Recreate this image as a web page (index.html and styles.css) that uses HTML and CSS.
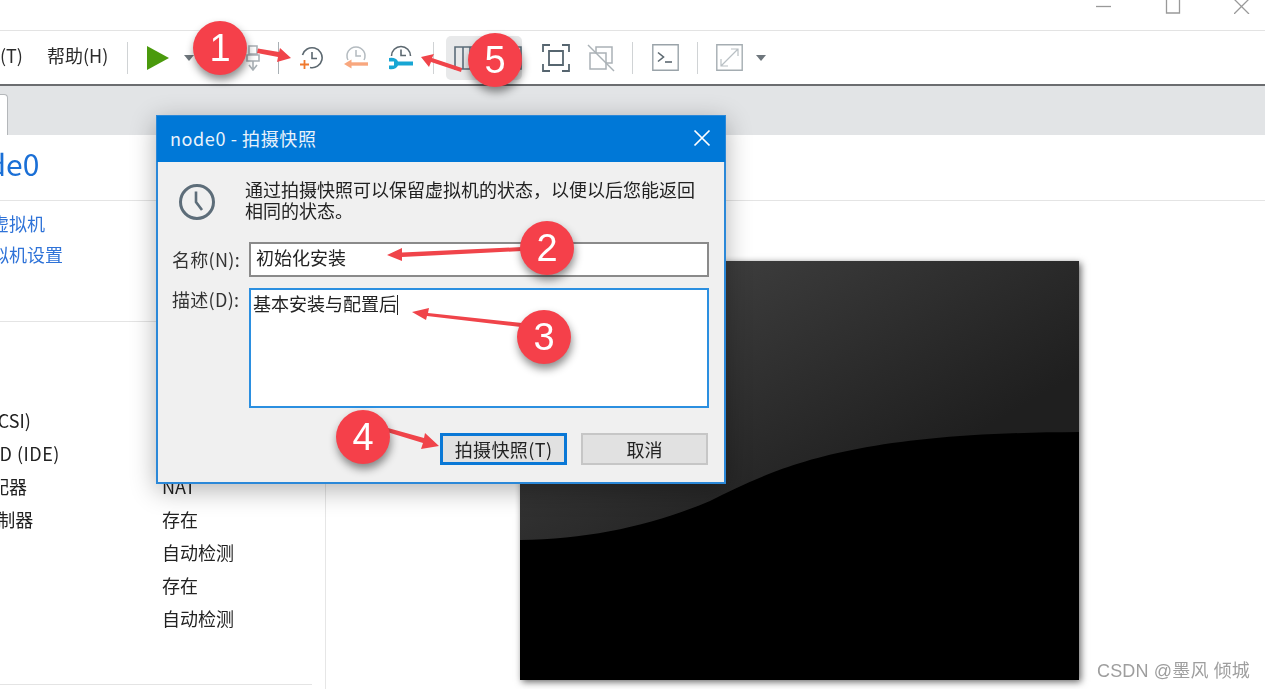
FILE: index.html
```html
<!DOCTYPE html>
<html lang="zh-CN">
<head>
    <meta charset="UTF-8">
    <title>node0 - 拍摄快照</title>
    <link rel="stylesheet" href="styles.css">
</head>
<body>

<div class="app">
    <div class="titlebar">
        <svg class="win-btn" width="16" height="14" viewBox="0 0 16 14"><path d="M0 6.500H15" stroke="#999" stroke-width="1.300"/></svg>
        <svg class="win-btn" width="16" height="14" viewBox="0 0 16 14"><path d="M1.500 0V13H14.500V0" fill="none" stroke="#999" stroke-width="1.300"/></svg>
        <svg class="win-btn" width="16" height="14" viewBox="0 0 16 14"><path d="M0 -1L15 14M15 -1L0 14" stroke="#999" stroke-width="1.300"/></svg>
    </div>

    <div class="toolbar">
        <span class="menu menu-tools">(T)</span>
        <span class="menu menu-help">帮助(H)</span>
        <i class="sep sep-a"></i>
        <svg class="tool play" width="24" height="26" viewBox="0 0 24 26"><path d="M1 1L23 13L1 25Z" fill="#4a9a0c"/></svg>
        <i class="caret caret-play"></i>
        <svg class="tool send" width="14" height="26" viewBox="0 0 14 26"><path d="M3 1H11V9H3ZM1 10H13V16H1ZM7 16V24M3 20L7 25L11 20" fill="none" stroke="#a9b0b5" stroke-width="1.600"/></svg>
        <i class="sep sep-b"></i>
        <svg class="tool snap" width="24" height="25" viewBox="0 0 24 25"><path d="M3.500 10A10 10 0 1 1 11 22.500" fill="none" stroke="#5c6870" stroke-width="1.600"/><path d="M13 7V13.500H18" fill="none" stroke="#5c6870" stroke-width="1.600"/><path d="M1 19.500H10M5.500 15V24" stroke="#f0792e" stroke-width="1.800"/></svg>
        <svg class="tool snap" width="24" height="25" viewBox="0 0 24 25"><path d="M4 15A9 9 0 1 1 20 15" fill="none" stroke="#b4bbc0" stroke-width="1.500"/><path d="M12 5V11H17" fill="none" stroke="#b4bbc0" stroke-width="1.500"/><path d="M24 19H6" fill="none" stroke="#f8a77e" stroke-width="3.400"/><path d="M7.500 14.500L0 19L7.500 23.500Z" fill="#f8a77e"/></svg>
        <svg class="tool snap" width="24" height="25" viewBox="0 0 24 25"><path d="M2.500 11A9.500 9.500 0 1 1 21.500 11" fill="none" stroke="#5c6870" stroke-width="1.600"/><path d="M12 4.500V10.500H17" fill="none" stroke="#5c6870" stroke-width="1.600"/><path d="M0 13Q7 12 9 16.500H24V20.500H9Q7 25 0 24V20.500H5V16.500H0Z" fill="#18a6d4"/></svg>
        <i class="sep sep-c"></i>
        <div class="tool-active">
            <svg width="68" height="24" viewBox="0 0 68 24"><path d="M1 1H67V23H1ZM9 1V23M16 1V23" fill="none" stroke="#5c6d7a" stroke-width="1.600"/></svg>
        </div>
        <svg class="tool fit" width="28" height="28" viewBox="0 0 28 28"><path d="M1 8V1H8M20 1H27V8M27 20V27H20M8 27H1V20" fill="none" stroke="#56656f" stroke-width="1.800"/><path d="M7 7H21V21H7Z" fill="none" stroke="#56656f" stroke-width="1.800"/></svg>
        <svg class="tool nofit" width="28" height="28" viewBox="0 0 28 28"><path d="M9 3H25V19H19V9H9ZM3 9H19V25H3Z" fill="none" stroke="#aab1b6" stroke-width="1.500"/><path d="M1 1L27 27" stroke="#aab1b6" stroke-width="1.500"/></svg>
        <i class="sep sep-d"></i>
        <svg class="tool console" width="27" height="27" viewBox="0 0 27 27"><path d="M.8 .8H26.200V26.200H.8Z" fill="none" stroke="#9aa3a9" stroke-width="1.400"/><path d="M6 8.500L11.500 13L6 17.500" fill="none" stroke="#5c6870" stroke-width="1.600"/><path d="M13 18H20" stroke="#5c6870" stroke-width="1.600"/></svg>
        <i class="sep sep-e"></i>
        <svg class="tool stretch" width="27" height="27" viewBox="0 0 27 27"><path d="M.8 .8H26.200V26.200H.8Z" fill="none" stroke="#a5adb2" stroke-width="1.400"/><path d="M5 22L22 5M15 5H22V12M5 15V22H12" fill="none" stroke="#b9c0c4" stroke-width="1.200"/></svg>
        <i class="caret caret-stretch"></i>
    </div>

    <div class="tabstrip">
        <div class="tab"></div>
    </div>

    <div class="content">
        <div class="side">
            <div class="vm-head">
                <h1 class="vm-name">node0</h1>
            </div>
            <div class="actions">
                <a class="action">开启此虚拟机</a>
                <a class="action">编辑虚拟机设置</a>
            </div>
            <div class="devices">
                <div class="row"><span class="dev">硬盘 (SCSI)</span><span class="val"></span></div>
                <div class="row"><span class="dev">CD/DVD (IDE)</span><span class="val"></span></div>
                <div class="row"><span class="dev">网络适配器</span><span class="val">NAT</span></div>
                <div class="row"><span class="dev">USB 控制器</span><span class="val">存在</span></div>
                <div class="row"><span class="dev"></span><span class="val">自动检测</span></div>
                <div class="row"><span class="dev"></span><span class="val">存在</span></div>
                <div class="row"><span class="dev"></span><span class="val">自动检测</span></div>
            </div>
            <div class="side-end"></div>
        </div>
        <div class="main">
            <div class="main-head"></div>
            <div class="screen">
                <svg width="559" height="419" viewBox="0 0 559 419">
                    <defs>
                        <linearGradient id="glow" gradientUnits="userSpaceOnUse" x1="200" y1="0" x2="340" y2="240">
                            <stop offset="0" stop-color="#3d3d3d"/>
                            <stop offset="1" stop-color="#1f1f1f"/>
                        </linearGradient>
                    </defs>
                    <rect width="559" height="419" fill="#000"/>
                    <path d="M0 0H559V171C330 172 260 205 190 240C130 265 70 278 0 279Z" fill="url(#glow)"/>
                </svg>
            </div>
        </div>
    </div>

    <div class="dialog">
        <div class="dialog-title">
            <span>node0 - 拍摄快照</span>
            <svg width="18" height="18" viewBox="0 0 18 18"><path d="M1.500 1.500L16.500 16.500M16.500 1.500L1.500 16.500" stroke="#fff" stroke-width="1.700"/></svg>
        </div>
        <div class="dialog-body">
            <div class="intro">
                <svg width="38" height="38" viewBox="0 0 38 38"><circle cx="19" cy="19" r="16.500" fill="none" stroke="#5d6d79" stroke-width="3"/><path d="M18 8.500V19L24 27" fill="none" stroke="#5d6d79" stroke-width="2.600"/></svg>
                <p>通过拍摄快照可以保留虚拟机的状态，以便以后您能返回相同的状态。</p>
            </div>
            <div class="field field-name">
                <label>名称(N):</label>
                <div class="input">初始化安装</div>
            </div>
            <div class="field field-desc">
                <label>描述(D):</label>
                <div class="textarea">基本安装与配置后<i class="cursor"></i></div>
            </div>
            <div class="buttons">
                <button class="btn btn-primary">拍摄快照(T)</button>
                <button class="btn">取消</button>
            </div>
        </div>
    </div>

    <!-- 标注箭头 -->
    <svg class="arrows" width="1265" height="689" viewBox="0 0 1265 689">
        <g fill="#f0444a">
            <path d="M258 48.500L279 52L280 48L291 58L277 62L278 57L257 53Z"/>
            <path d="M522 247L402 252.500L402 248L387 255L402 261L402 257L522 251Z"/>
            <path d="M522 323L428 313L429 308L412 312L426 320L427 316L521 327Z"/>
            <path d="M388 428L424 438L425 433L439 446L421 449L423 443L387 432Z"/>
            <path d="M462 68L432 58L434 54L421 57L429 67L431 62L461 72Z"/>
        </g>
    </svg>

    <span class="badge badge-1">1</span>
    <span class="badge badge-2">2</span>
    <span class="badge badge-3">3</span>
    <span class="badge badge-4">4</span>
    <span class="badge badge-5">5</span>

    <div class="watermark">CSDN @墨风 倾城</div>
</div>

</body>
</html>
```

FILE: styles.css
```css
html, body {
    margin: 0;
    padding: 0;
    overflow: hidden;
    background: #fff;
}
.app {
    position: relative;
    width: 1265px;
    height: 689px;
    overflow: hidden;
    font-family: "Noto Sans CJK SC", "Noto Sans", sans-serif;
    font-size: 18px;
    color: #222;
    filter: blur(0.45px);
}

/* 标题栏 */
.titlebar {
    height: 30px;
    display: flex;
    justify-content: flex-end;
    gap: 53px;
    padding-right: 15px;
    border-bottom: 1px solid #e3e3e3;
}
.win-btn {
    display: block;
}

/* 工具栏 */
.toolbar {
    height: 53px;
    display: flex;
    align-items: center;
    border-bottom: 2px solid #6b6d70;
}
.menu {
    font-size: 18px;
    color: #2b2b2b;
    line-height: 20px;
    margin-top: -5px;
}
.menu-help {
    margin-left: 24px;
}
.sep {
    width: 1px;
    height: 32px;
    background: #d0d3d5;
    flex: none;
}
.sep-a { margin-left: 19px; }
.sep-b { margin-left: 18px; background: #a9b0b5; }
.sep-c { margin-left: 20px; }
.sep-d { margin-left: 17px; }
.sep-e { margin-left: 18px; }
.tool {
    flex: none;
    display: block;
}
.play { margin-left: 18px; }
.caret {
    width: 0;
    height: 0;
    border-left: 5px solid transparent;
    border-right: 5px solid transparent;
    border-top: 6px solid #6e767c;
    flex: none;
}
.caret-play { margin-left: 14px; }
.send { margin-left: 52px; }
.snap { margin-left: 21px; }
.sep-b + .snap { margin-left: 20px; }
.tool-active {
    margin-left: 12px;
    width: 76px;
    height: 44px;
    background: #e8e9ea;
    border-radius: 5px;
    display: flex;
    align-items: center;
    padding-left: 8px;
    box-sizing: border-box;
    flex: none;
}
.tool-active svg {
    flex: none;
}
.fit { margin-left: 20px; }
.nofit { margin-left: 17px; }
.console { margin-left: 19px; }
.stretch { margin-left: 18px; }
.caret-stretch { margin-left: 13px; }

/* 标签栏 */
.tabstrip {
    height: 49px;
    background: #e2e4e6;
    display: flex;
    align-items: flex-end;
}
.tab {
    width: 8px;
    height: 41px;
    background: #fff;
    border-right: 1px solid #b4b7ba;
    border-top: 1px solid #b4b7ba;
    border-top-right-radius: 4px;
    box-sizing: border-box;
}

/* 内容 */
.content {
    display: flex;
    height: 554px;
}
.side {
    width: 326px;
    flex: none;
    border-right: 1px solid #e6e6e6;
    box-sizing: border-box;
    overflow: hidden;
}
.vm-head {
    height: 65px;
    border-bottom: 1px solid #e4e4e4;
    margin-right: -1px;
}
.vm-name {
    margin: 0 0 0 -49px;
    padding-top: 7px;
    font-size: 30px;
    font-weight: 400;
    line-height: 42px;
    color: #1a6fd6;
}
.actions {
    height: 121px;
    border-bottom: 1px solid #e4e4e4;
    padding-top: 7px;
    box-sizing: border-box;
}
.action {
    display: block;
    margin-left: -63px;
    font-size: 18px;
    line-height: 31px;
    color: #2f73d8;
}
.devices {
    padding-top: 82px;
}
.row {
    display: flex;
    height: 33px;
    line-height: 33px;
    font-size: 18px;
}
.dev {
    width: 162px;
    flex: none;
    white-space: nowrap;
    overflow: hidden;
}
.row:nth-child(1) .dev { text-indent: -59px; }
.row:nth-child(2) .dev { text-indent: -56px; letter-spacing: 0.5px; }
.row:nth-child(3) .dev { text-indent: -63px; }
.row:nth-child(4) .dev { text-indent: -60px; }
.val {
    white-space: nowrap;
}
.side-end {
    margin-top: 49px;
    margin-right: 13px;
    border-top: 1px solid #e4e4e4;
}
.main {
    flex: 1;
    min-width: 0;
}
.main-head {
    height: 65px;
    border-bottom: 1px solid #e4e4e4;
}
.screen {
    width: 559px;
    height: 419px;
    margin: 60px 0 0 194px;
    box-shadow: 2px 2px 7px rgba(0, 0, 0, 0.6);
}
.screen svg {
    display: block;
}

/* 对话框 */
.dialog {
    position: absolute;
    left: 156px;
    top: 115px;
    width: 570px;
    height: 369px;
    box-sizing: border-box;
    border: 2px solid #2b88d8;
    border-top: 1px solid #2b88d8;
    background: #f0f0f0;
    box-shadow: 0 6px 24px rgba(0, 0, 0, 0.3);
}
.dialog-title {
    height: 46px;
    margin: 0 -1px;
    padding: 0 14px 2px 13px;
    box-sizing: border-box;
    background: #0078d7;
    color: #e8f2fb;
    display: flex;
    align-items: center;
    justify-content: space-between;
    font-size: 18px;
    letter-spacing: 0.6px;
}
.dialog-body {
    padding: 14px 15px 0 14px;
}
.intro {
    display: flex;
    align-items: flex-start;
}
.intro svg {
    margin: 7px 0 0 6px;
    flex: none;
}
.intro p {
    margin: 3px 0 0 29px;
    width: 455px;
    font-size: 18px;
    line-height: 21px;
    color: #222;
}
.field {
    display: flex;
}
.field label {
    width: 77px;
    flex: none;
    font-size: 18px;
    letter-spacing: 0.3px;
    white-space: nowrap;
    color: #333;
}
.field-name {
    margin-top: 21px;
}
.field-name label {
    padding-top: 4px;
}
.input {
    width: 460px;
    height: 35px;
    box-sizing: border-box;
    border: 2px solid #8a8a8a;
    background: #fff;
    padding-left: 5px;
    line-height: 27px;
    font-size: 18px;
}
.field-desc {
    margin-top: 11px;
}
.field-desc label {
    line-height: 22px;
}
.textarea {
    width: 460px;
    height: 120px;
    box-sizing: border-box;
    border: 2px solid #2b8fe0;
    background: #fff;
    padding: 0 0 0 2px;
    line-height: 26px;
    font-size: 18px;
}
.cursor {
    display: inline-block;
    width: 1px;
    height: 20px;
    background: #222;
    vertical-align: -4px;
}
.buttons {
    display: flex;
    gap: 14px;
    margin: 25px 0 0 268px;
}
.btn {
    width: 127px;
    height: 32px;
    flex: none;
    padding: 0;
    border: 2px solid #c6c6c6;
    background: #e1e1e1;
    font-family: inherit;
    font-size: 18px;
    line-height: 24px;
    color: #222;
}
.btn-primary {
    border: 3px solid #0a78d6;
    letter-spacing: 0.4px;
}

/* 标注 */
.arrows {
    position: absolute;
    left: 0;
    top: 0;
}
.badge {
    position: absolute;
    width: 54px;
    height: 54px;
    border-radius: 50%;
    background: #f5404a;
    color: #fff;
    font-family: "Liberation Sans", sans-serif;
    font-size: 38px;
    line-height: 54px;
    text-align: center;
    box-shadow: 1px 5px 8px rgba(0, 0, 0, 0.45);
}
.badge-1 { left: 193px; top: 21px; }
.badge-2 { left: 520px; top: 221px; }
.badge-3 { left: 517px; top: 310px; }
.badge-4 { left: 336px; top: 410px; }
.badge-5 { left: 468px; top: 33px; }

.watermark {
    position: absolute;
    right: 15px;
    top: 660px;
    font-family: "Liberation Sans", "Noto Sans CJK SC", sans-serif;
    font-size: 18px;
    letter-spacing: 0.15px;
    line-height: 22px;
    color: #9e9e9e;
}
```
